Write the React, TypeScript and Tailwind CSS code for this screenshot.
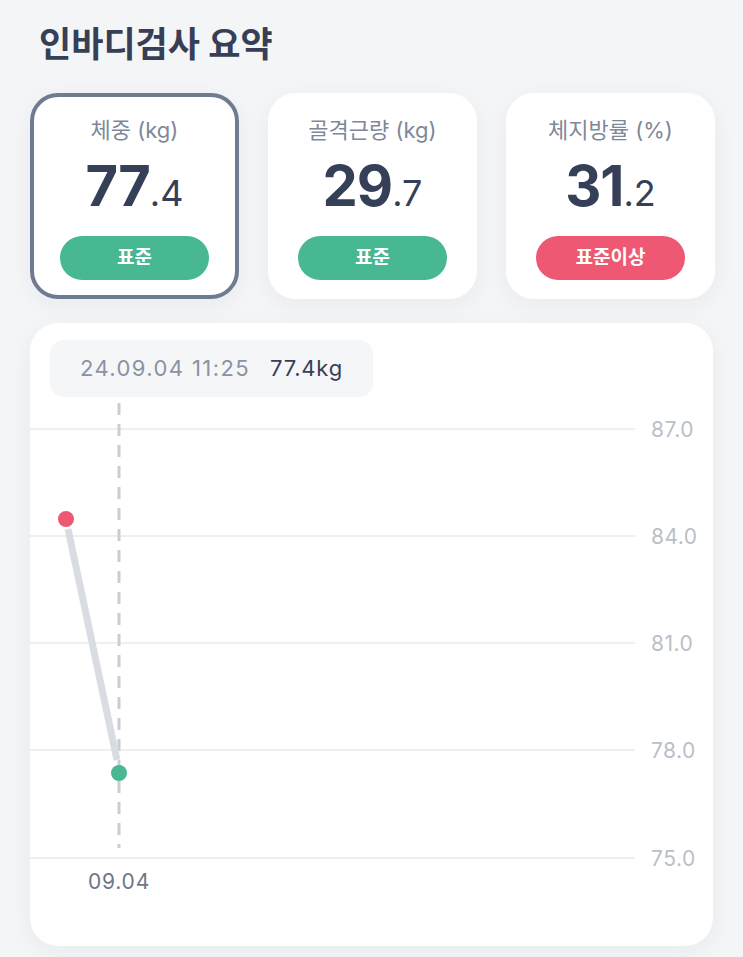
const FONT = { fontFamily: '"Inter", "Noto Sans CJK KR", sans-serif' };

type Stat = {
  label: string;
  whole: string;
  frac: string;
  status: string;
  tone: "green" | "red";
  active?: boolean;
};

const stats: Stat[] = [
  { label: "체중 (kg)", whole: "77", frac: ".4", status: "표준", tone: "green", active: true },
  { label: "골격근량 (kg)", whole: "29", frac: ".7", status: "표준", tone: "green" },
  { label: "체지방률 (%)", whole: "31", frac: ".2", status: "표준이상", tone: "red" },
];

const grid = [
  { y: 106, v: "87.0" },
  { y: 213, v: "84.0" },
  { y: 320, v: "81.0" },
  { y: 427, v: "78.0" },
  { y: 535, v: "75.0" },
];

function StatCard({ s }: { s: Stat }) {
  return (
    <div
      className={`h-[206px] rounded-[28px] bg-white border-4 flex flex-col items-center pt-[19px] shadow-[0_6px_24px_rgba(30,40,60,0.05)] ${
        s.active ? "border-[#6e7b90]" : "border-white"
      }`}
    >
      <div className="text-[22px] leading-[28px] text-[#7e8899]">{s.label}</div>
      <div className="mt-[10px] h-[64px] flex items-baseline text-[#353f57]">
        <span className="text-[56px] leading-[64px] font-bold tracking-[-1px]">{s.whole}</span>
        <span className="text-[36px] leading-[64px]">{s.frac}</span>
      </div>
      <div
        className={`mt-[18px] h-[44px] w-[149px] rounded-full flex items-center justify-center text-white text-[19px] font-bold ${
          s.tone === "green" ? "bg-[#47b891]" : "bg-[#ef5872]"
        }`}
      >
        {s.status}
      </div>
    </div>
  );
}

function Chart() {
  return (
    <div className="relative mt-6 h-[623px] rounded-[28px] bg-white shadow-[0_6px_24px_rgba(30,40,60,0.05)] overflow-hidden">
      <svg width="683" height="623" className="block">
        {grid.map((g) => (
          <g key={g.v}>
            <line x1="0" x2="605" y1={g.y} y2={g.y} stroke="#e9eaed" strokeWidth="1.5" />
            <text
              x="621"
              y={g.y + 2}
              dominantBaseline="middle"
              fontSize="21"
              letterSpacing="0.5"
              fill="#babfc8"
              style={FONT}
            >
              {g.v}
            </text>
          </g>
        ))}
        <line x1="89" x2="89" y1="80" y2="525" stroke="#c9cdd4" strokeWidth="3" strokeDasharray="12 9" />
        <line x1="38" y1="206" x2="87" y2="437" stroke="#d9dde3" strokeWidth="7" />
        <circle cx="36" cy="196" r="8" fill="#ef5872" />
        <circle cx="89" cy="450" r="8" fill="#47b891" />
        <text
          x="89"
          y="560"
          textAnchor="middle"
          dominantBaseline="middle"
          fontSize="21"
          letterSpacing="0.8"
          fill="#6e7789"
          style={FONT}
        >
          09.04
        </text>
      </svg>
      <div className="absolute left-[20px] top-[17px] h-[57px] w-[323px] rounded-[14px] bg-[#f5f6f8] flex items-center pl-[30px] text-[22px]">
        <span className="text-[#8a93a3] tracking-[1.4px]">24.09.04 11:25</span>
        <span className="ml-[20px] text-[#353f57] tracking-[0.8px]">77.4kg</span>
      </div>
    </div>
  );
}

export default function App() {
  return (
    <div className="min-h-screen w-[743px] bg-[#f4f5f7] px-[30px] pt-6" style={FONT}>
      <h1 className="pl-[9px] text-[35px] leading-[40px] font-bold text-[#363f55]">인바디검사 요약</h1>
      <div className="mt-[29px] grid grid-cols-[209px_209px_209px] gap-[29px]">
        {stats.map((s) => (
          <StatCard key={s.label} s={s} />
        ))}
      </div>
      <div className="w-[683px]">
        <Chart />
      </div>
    </div>
  );
}
